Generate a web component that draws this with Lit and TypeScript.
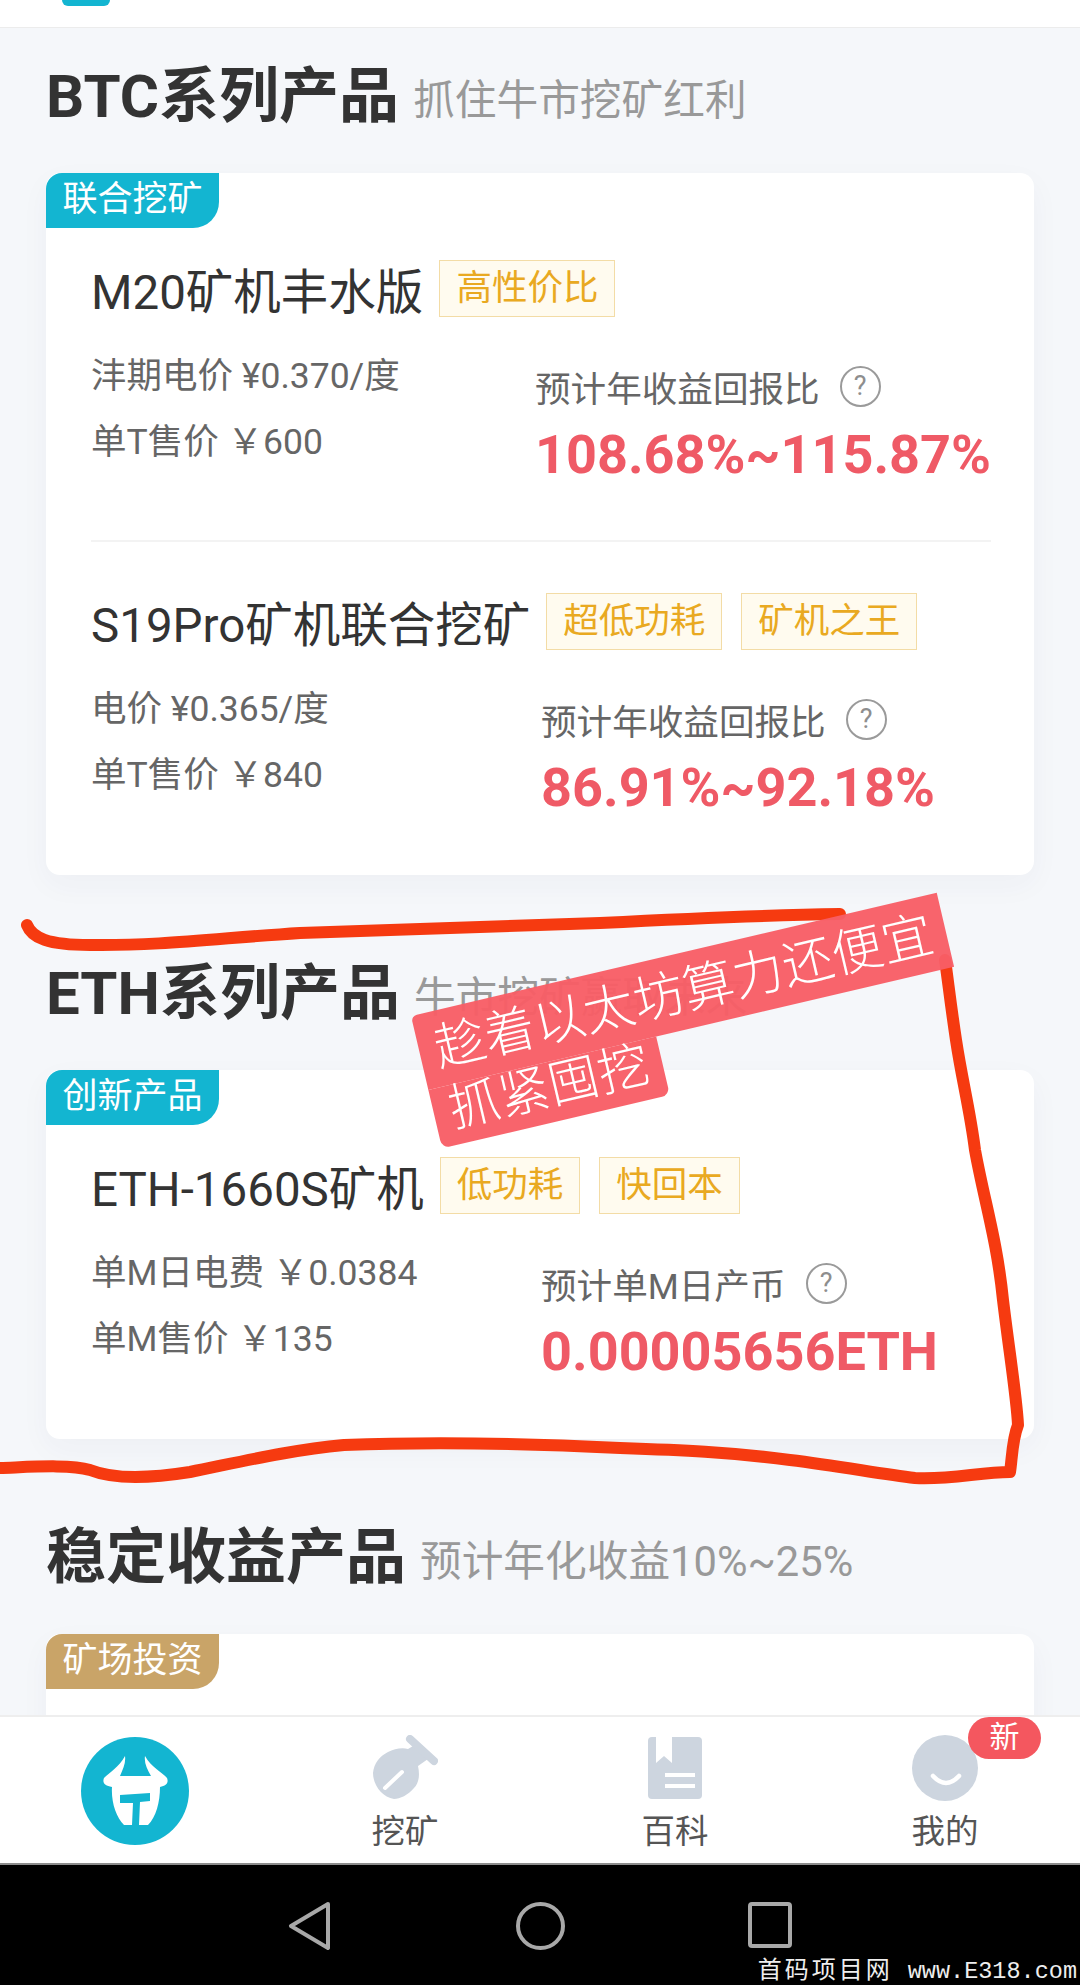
import { LitElement, html, css, svg } from "lit";
import { customElement } from "lit/decorators.js";

interface Product {
  name: string;
  tags: string[];
  specs: string[];
  label: string;
  value: string;
  leftWidth: number;
}
interface Section {
  title: string;
  sub: string;
  tag: string;
  gold?: boolean;
  products: Product[];
}

const SECTIONS: Section[] = [
  {
    title: "BTC系列产品",
    sub: "抓住牛市挖矿红利",
    tag: "联合挖矿",
    products: [
      {
        name: "M20矿机丰水版",
        tags: ["高性价比"],
        specs: ["沣期电价 ¥0.370/度", "单T售价 ￥600"],
        label: "预计年收益回报比",
        value: "108.68%~115.87%",
        leftWidth: 444,
      },
      {
        name: "S19Pro矿机联合挖矿",
        tags: ["超低功耗", "矿机之王"],
        specs: ["电价 ¥0.365/度", "单T售价 ￥840"],
        label: "预计年收益回报比",
        value: "86.91%~92.18%",
        leftWidth: 450,
      },
    ],
  },
  {
    title: "ETH系列产品",
    sub: "牛市挖矿赢取未来",
    tag: "创新产品",
    products: [
      {
        name: "ETH-1660S矿机",
        tags: ["低功耗", "快回本"],
        specs: ["单M日电费 ￥0.0384", "单M售价 ￥135"],
        label: "预计单M日产币",
        value: "0.00005656ETH",
        leftWidth: 450,
      },
    ],
  },
  {
    title: "稳定收益产品",
    sub: "预计年化收益10%~25%",
    tag: "矿场投资",
    gold: true,
    products: [],
  },
];

const ICON = "#cdd5df";

@customElement("app-root")
export class AppRoot extends LitElement {
  static styles = css`
    :host {
      display: flex;
      flex-direction: column;
      position: relative;
      width: 1080px;
      height: 1985px;
      overflow: hidden;
      background: #f5f7fa;
      font-family: Roboto, "Noto Sans CJK SC", sans-serif;
      color: #333;
    }
    .top {
      flex: none;
      height: 27px;
      background: #fff;
      border-bottom: 1px solid #ececec;
    }
    .top-arc {
      width: 48px;
      height: 6px;
      margin-left: 62px;
      background: #13b5d1;
      border-radius: 0 0 24px 24px;
    }
    main {
      flex: 1;
      min-height: 0;
      overflow: hidden;
      padding: 41px 46px 0;
    }
    section {
      margin-bottom: 91px;
    }
    .head {
      display: flex;
      align-items: center;
      height: 56px;
      margin-bottom: 48px;
    }
    .head h2 {
      margin: 0;
      font-size: 60px;
      line-height: 56px;
      font-weight: 700;
      color: #333;
      white-space: nowrap;
    }
    .head span {
      margin-left: 14px;
      font-size: 41.7px;
      color: #999;
      white-space: nowrap;
    }
    .card {
      position: relative;
      width: 988px;
      box-sizing: border-box;
      padding: 87px 43px 0 45px;
      background: #fff;
      border-radius: 14px;
      box-shadow: 0 10px 30px rgba(40, 60, 90, 0.04);
      min-height: 260px;
    }
    .ribbon {
      position: absolute;
      left: 0;
      top: 0;
      width: 173px;
      height: 55px;
      line-height: 53px;
      text-align: center;
      font-size: 35px;
      color: #fff;
      background: #13b5d1;
      border-radius: 16px 0 26px 0;
    }
    .ribbon.gold {
      background: #c9a468;
    }
    .product {
      padding-bottom: 47px;
    }
    .product + .product {
      border-top: 2px solid #f3f3f3;
      padding-top: 51px;
      margin-top: -2px;
    }
    .name-row {
      display: flex;
      align-items: center;
      height: 57px;
    }
    .name {
      font-size: 47.5px;
      color: #333;
      white-space: nowrap;
      margin-right: 16px;
    }
    .tag {
      box-sizing: border-box;
      height: 57px;
      line-height: 55px;
      padding: 0 16px;
      margin-right: 19px;
      border: 1.5px solid #f3dca6;
      background: #fffbef;
      color: #e9a921;
      font-size: 35.5px;
      white-space: nowrap;
    }
    .stats {
      display: flex;
      margin-top: 26px;
    }
    .specs {
      flex: none;
      font-size: 35.5px;
      line-height: 66px;
      color: #666;
      white-space: nowrap;
    }
    .yield {
      padding-top: 18px;
    }
    .yield-label {
      display: flex;
      align-items: center;
      height: 50px;
      font-size: 35.6px;
      color: #666;
      white-space: nowrap;
    }
    .help {
      box-sizing: border-box;
      width: 41px;
      height: 41px;
      margin-left: 20px;
      border: 2px solid #9a9a9a;
      border-radius: 50%;
      color: #8e8e8e;
      font-size: 27px;
      line-height: 37px;
      text-align: center;
    }
    .yield-value {
      margin-top: 4px;
      font-size: 54px;
      line-height: 80px;
      font-weight: 700;
      color: #ef5a66;
      white-space: nowrap;
    }
    nav {
      flex: none;
      display: grid;
      grid-template-columns: repeat(4, 1fr);
      height: 150px;
      box-sizing: border-box;
      background: #fff;
      border-top: 2px solid #eeeeee;
      border-bottom: 2px solid #8c8c8c;
      position: relative;
    }
    .tab {
      position: relative;
      display: flex;
      flex-direction: column;
      align-items: center;
      padding-top: 18px;
      font-size: 33.5px;
      line-height: 44px;
      color: #555;
    }
    .tab svg {
      display: block;
      height: 66px;
      margin-bottom: 9px;
    }
    .tab.home {
      padding-top: 20px;
    }
    .tab.home svg {
      height: 108px;
      margin: 0;
    }
    .new {
      position: absolute;
      left: 158px;
      top: 0;
      width: 73px;
      height: 42px;
      border-radius: 21px;
      background: #f4575f;
      color: #fff;
      font-size: 30px;
      line-height: 40px;
      text-align: center;
    }
    .sys {
      flex: none;
      display: flex;
      align-items: flex-start;
      height: 120px;
      box-sizing: border-box;
      padding: 37px 0 0 288px;
      background: #000;
    }
    .sys svg {
      display: block;
      flex: none;
    }
    .watermark {
      position: absolute;
      right: 3px;
      bottom: 0;
      font-family: "Liberation Mono", "Noto Sans CJK SC", monospace;
      font-size: 23.5px;
      line-height: 26px;
      color: #eee;
      white-space: pre;
    }
    .watermark b {
      font-weight: 400;
      font-size: 24px;
      letter-spacing: 3px;
      margin-right: 1px;
    }
    .ink {
      position: absolute;
      left: 0;
      top: 0;
      pointer-events: none;
    }
    .sticker {
      position: absolute;
      left: 411px;
      top: 1016px;
      transform: rotate(-13.2deg);
      transform-origin: 0 0;
      color: #fff;
      font-size: 51px;
      font-weight: 300;
      white-space: nowrap;
    }
    .sticker div {
      width: max-content;
      box-sizing: border-box;
      background: rgba(248, 94, 102, 0.96);
      height: 76px;
      line-height: 78px;
      padding: 0 14px 0 16px;
    }
    .sticker div:first-child {
      border-radius: 6px 0 0 0;
    }
    .sticker div:last-child {
      height: 60px;
      line-height: 50px;
      border-radius: 0 0 8px 8px;
    }
  `;

  private product(p: Product) {
    return html`<div class="product">
      <div class="name-row">
        <div class="name">${p.name}</div>
        ${p.tags.map((t) => html`<div class="tag">${t}</div>`)}
      </div>
      <div class="stats">
        <div class="specs" style="width:${p.leftWidth}px">
          ${p.specs.map((s) => html`<div>${s}</div>`)}
        </div>
        <div class="yield">
          <div class="yield-label">${p.label}<span class="help">?</span></div>
          <div class="yield-value">${p.value}</div>
        </div>
      </div>
    </div>`;
  }

  private section(s: Section) {
    return html`<section>
      <div class="head"><h2>${s.title}</h2><span>${s.sub}</span></div>
      <div class="card">
        <div class="ribbon ${s.gold ? "gold" : ""}">${s.tag}</div>
        ${s.products.map((p) => this.product(p))}
      </div>
    </section>`;
  }

  render() {
    return html`
      <div class="top"><div class="top-arc"></div></div>
      <main>${SECTIONS.map((s) => this.section(s))}</main>
      <nav>
        <div class="tab home">
          <svg viewBox="0 0 108 108" width="108" height="108">
            <circle cx="54" cy="54" r="54" fill="#13b5d1" />
            <path
              fill="#fff"
              d="M44 19C38 30 28 36 23 41C21 46 24 49 31 50C30 65 35 80 43 88H67C75 80 79 65 79 50C85 49 88 46 86 41C82 36 70 30 64 19C63 26 66 32 70 39H39C42 32 45 26 44 19Z"
            />
            <path fill="#13b5d1" d="M39 58L69 56V64L59 65L58 88H51L52 66L39 66Z" />
          </svg>
        </div>
        <div class="tab">
          <svg viewBox="0 0 66 66" width="66" height="66">
            <path
              fill="${ICON}"
              d="M16 17C22 14 30 12 36 14L46 8L56 24L46 31C48 40 47 48 42 53C36 60 28 64 22 64C10 62 1 50 1 38C2 28 8 21 16 17Z"
            />
            <path stroke="${ICON}" stroke-width="8" stroke-linecap="round" d="M38 4L62 26" />
            <path stroke="#fff" stroke-width="4" stroke-linecap="round" d="M13 53L30 37" />
          </svg>
          挖矿
        </div>
        <div class="tab">
          <svg viewBox="0 0 54 62" width="54" height="66">
            <rect x="0" y="0" width="54" height="62" rx="4" fill="${ICON}" />
            <path fill="#fff" d="M8 0H24V26L16 19L8 26Z" />
            <path stroke="#fff" stroke-width="4" d="M17 38H47M17 49H47" />
          </svg>
          百科
        </div>
        <div class="tab">
          <svg viewBox="0 0 66 66" width="66" height="66">
            <circle cx="33" cy="33" r="33" fill="${ICON}" />
            <path fill="none" stroke="#fff" stroke-width="4.5" stroke-linecap="round" d="M21 41Q34 55 47 41" />
          </svg>
          我的
          <div class="new">新</div>
        </div>
      </nav>
      <div class="sys">
        <svg width="42" height="48" viewBox="0 0 42 48">
          <path d="M40 2L3 24L40 46Z" fill="none" stroke="#a8a8a8" stroke-width="4" stroke-linejoin="round" />
        </svg>
        <svg width="49" height="48" viewBox="0 0 49 48" style="margin-left:186px">
          <ellipse cx="24.5" cy="24" rx="22.5" ry="22" fill="none" stroke="#a8a8a8" stroke-width="4" />
        </svg>
        <svg width="44" height="46" viewBox="0 0 44 46" style="margin-left:183px">
          <rect x="2" y="2" width="40" height="42" rx="2" fill="none" stroke="#a8a8a8" stroke-width="4" />
        </svg>
      </div>
      <div class="watermark"><b>首码项目网</b> www.E318.com</div>
      <svg class="ink" width="1080" height="1985" viewBox="0 0 1080 1985" fill="none">
        ${svg`<path
          stroke="#f63a10"
          stroke-width="12"
          stroke-linecap="round"
          stroke-linejoin="round"
          d="M27 925C32 938 48 945 90 945C160 946 220 938 300 933C400 930 500 927 600 923C700 918 780 915 840 914M945 960C948 980 950 1000 956 1040C962 1080 970 1110 975 1150C984 1200 997 1240 1003 1300C1009 1350 1017 1400 1018 1425C1012 1440 1012 1460 1010 1472C980 1472 950 1480 915 1478C880 1474 840 1466 790 1460C730 1452 680 1450 620 1448C520 1443 420 1442 344 1445C290 1450 240 1462 190 1472C140 1480 110 1478 90 1470C70 1464 30 1467 0 1468"
        />`}
      </svg>
      <div class="sticker">
        <div>趁着以太坊算力还便宜</div>
        <div>抓紧囤挖</div>
      </div>
    `;
  }
}
